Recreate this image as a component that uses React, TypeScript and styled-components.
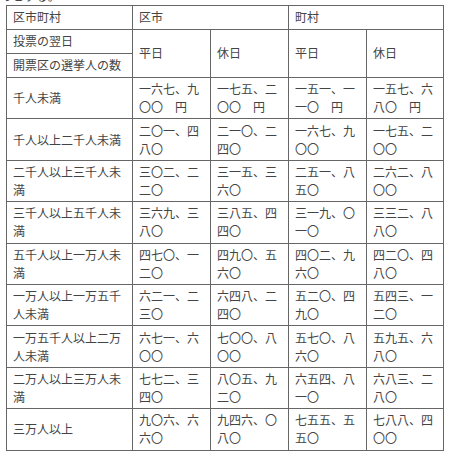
import React from "react";
import styled, { createGlobalStyle } from "styled-components";

const GlobalStyle = createGlobalStyle`
  html, body {
    margin: 0;
    padding: 0;
    background: #fff;
  }
  body {
    font-family: "Noto Sans CJK JP", "Noto Sans", sans-serif;
    color: #444;
  }
`;

const Page = styled.div`
  padding: 0 0 0 6px;
`;

const Lead = styled.p`
  margin: -13px 0 0 -6px;
  font-size: 12px;
  line-height: 18px;
  height: 18px;
`;

const Table = styled.table`
  border-collapse: collapse;
  table-layout: fixed;
  width: 437px;
  font-size: 12px;
  line-height: 18px;
`;

const Cell = styled.td<{ $head?: boolean }>`
  border: 1px solid #666;
  padding: ${(p) => (p.$head ? "2px 6px 3px" : "2px 6px 2px")};
  vertical-align: middle;
  text-align: left;
  height: ${(p) => (p.$head ? "18px" : "36.4px")};
`;

const Label = styled.div<{ $width: number }>`
  width: ${(p) => p.$width}px;
  word-break: break-all;
  line-break: anywhere;
`;

type Row = [string, string, string, string, string];

const rows: Row[] = [
  ["千人未満", "一六七、九〇〇　円", "一七五、二〇〇　円", "一五一、一一〇　円", "一五七、六八〇　円"],
  ["千人以上二千人未満", "二〇一、四八〇", "二一〇、二四〇", "一六七、九〇〇", "一七五、二〇〇"],
  ["二千人以上三千人未満", "三〇二、二二〇", "三一五、三六〇", "二五一、八五〇", "二六二、八〇〇"],
  ["三千人以上五千人未満", "三六九、三八〇", "三八五、四四〇", "三一九、〇一〇", "三三二、八八〇"],
  ["五千人以上一万人未満", "四七〇、一二〇", "四九〇、五六〇", "四〇二、九六〇", "四二〇、四八〇"],
  ["一万人以上一万五千人未満", "六二一、二三〇", "六四八、二四〇", "五二〇、四九〇", "五四三、一二〇"],
  ["一万五千人以上二万人未満", "六七一、六〇〇", "七〇〇、八〇〇", "五七〇、八六〇", "五九五、六八〇"],
  ["二万人以上三万人未満", "七七二、三四〇", "八〇五、九二〇", "六五四、八一〇", "六八三、二八〇"],
  ["三万人以上", "九〇六、六六〇", "九四六、〇八〇", "七五五、五五〇", "七八八、四〇〇"],
];

export default function App() {
  return (
    <Page>
      <GlobalStyle />
      <Lead>のとする。</Lead>
      <Table>
        <colgroup>
          <col style={{ width: 126 }} />
          <col style={{ width: 78 }} />
          <col style={{ width: 78 }} />
          <col style={{ width: 78 }} />
          <col style={{ width: 77 }} />
        </colgroup>
        <tbody>
          <tr>
            <Cell $head>区市町村</Cell>
            <Cell $head colSpan={2}>区市</Cell>
            <Cell $head colSpan={2}>町村</Cell>
          </tr>
          <tr>
            <Cell $head>投票の翌日</Cell>
            <Cell $head rowSpan={2}>平日</Cell>
            <Cell $head rowSpan={2}>休日</Cell>
            <Cell $head rowSpan={2}>平日</Cell>
            <Cell $head rowSpan={2}>休日</Cell>
          </tr>
          <tr>
            <Cell $head>開票区の選挙人の数</Cell>
          </tr>
          {rows.map((r) => (
            <tr key={r[0]}>
              {r.map((v, i) => (
                <Cell key={i}>
                  <Label $width={i === 0 ? 109 : 62}>{v}</Label>
                </Cell>
              ))}
            </tr>
          ))}
        </tbody>
      </Table>
    </Page>
  );
}
